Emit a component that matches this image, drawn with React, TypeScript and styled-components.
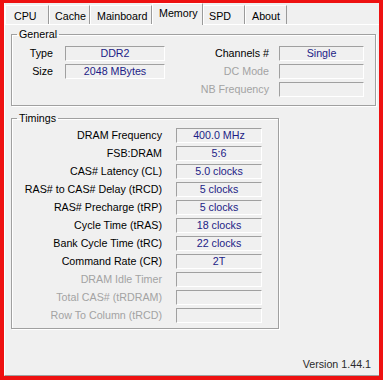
import styled, { createGlobalStyle } from "styled-components";

const GlobalStyle = createGlobalStyle`
  html, body {
    margin: 0;
    padding: 0;
    background: #f0f0f0;
  }
  body {
    font-family: "Liberation Sans", Arial, sans-serif;
    font-size: 10.7px;
    color: #000;
  }
`;

const tabs = [
  { name: "CPU", width: 44, pad: 8 },
  { name: "Cache", width: 41, pad: 5 },
  { name: "Mainboard", width: 62, pad: 6 },
  { name: "Memory", width: 51, pad: 6 },
  { name: "SPD", width: 42, pad: 5 },
  { name: "About", width: 42, pad: 6 },
];

const general = [
  { label: "Type", value: "DDR2" },
  { label: "Size", value: "2048 MBytes" },
];

const channels = [
  { label: "Channels #", value: "Single" },
  { label: "DC Mode", value: "", off: true },
  { label: "NB Frequency", value: "", off: true },
];

const timings = [
  { label: "DRAM Frequency", value: "400.0 MHz" },
  { label: "FSB:DRAM", value: "5:6" },
  { label: "CAS# Latency (CL)", value: "5.0 clocks" },
  { label: "RAS# to CAS# Delay (tRCD)", value: "5 clocks" },
  { label: "RAS# Precharge (tRP)", value: "5 clocks" },
  { label: "Cycle Time (tRAS)", value: "18 clocks" },
  { label: "Bank Cycle Time (tRC)", value: "22 clocks" },
  { label: "Command Rate (CR)", value: "2T" },
  { label: "DRAM Idle Timer", value: "", off: true },
  { label: "Total CAS# (tRDRAM)", value: "", off: true },
  { label: "Row To Column (tRCD)", value: "", off: true },
];

export default function App() {
  return (
    <>
      <GlobalStyle />
      <Frame>
        <Window>
          <TabBar>
            {tabs.map((t) => (
              <Tab
                key={t.name}
                $active={t.name === "Memory"}
                $w={t.width}
                $pad={t.pad}
              >
                {t.name}
              </Tab>
            ))}
          </TabBar>
          <Panel>
            <Group $w={365} $h={78}>
              <Legend>General</Legend>
              <GeneralRow>
                <InfoGrid $labelW={41} $fieldW={100} $gap={12}>
                  {general.map((r) => (
                    <InfoRow key={r.label} {...r} />
                  ))}
                </InfoGrid>
                <InfoGrid $labelW={90} $fieldW={85} $gap={10}>
                  {channels.map((r) => (
                    <InfoRow key={r.label} {...r} />
                  ))}
                </InfoGrid>
              </GeneralRow>
            </Group>
            <Group $w={268} $h={217} $top={6}>
              <Legend>Timings</Legend>
              <TimingsBody>
                <InfoGrid $labelW={150} $fieldW={86} $gap={14}>
                  {timings.map((r) => (
                    <InfoRow key={r.label} {...r} />
                  ))}
                </InfoGrid>
              </TimingsBody>
            </Group>
          </Panel>
          <Footer>Version 1.44.1</Footer>
        </Window>
      </Frame>
    </>
  );
}

function InfoRow({
  label,
  value,
  off,
}: {
  label: string;
  value: string;
  off?: boolean;
}) {
  return (
    <>
      <Label $off={off}>{label}</Label>
      <Field>{value}</Field>
    </>
  );
}

const Frame = styled.div`
  width: 383px;
  height: 380px;
  box-sizing: border-box;
  border: 4px solid #ee1111;
  border-top-width: 3px;
  background: #f0f0f0;
`;

const Window = styled.div`
  height: 100%;
  box-sizing: border-box;
  border-left: 1px solid #ffffff;
  border-bottom: 1px solid #a0a0a0;
  display: flex;
  flex-direction: column;
`;

const TabBar = styled.div`
  display: flex;
  align-items: flex-end;
  height: 21px;
  position: relative;
  z-index: 1;
`;

const Tab = styled.div<{ $active?: boolean; $w: number; $pad: number }>`
  box-sizing: border-box;
  width: ${(p) => p.$w}px;
  height: ${(p) => (p.$active ? 22 : 19)}px;
  margin-bottom: ${(p) => (p.$active ? -1 : 0)}px;
  padding-left: ${(p) => p.$pad}px;
  padding-top: ${(p) => (p.$active ? 3 : 4)}px;
  background: #f0f0f0;
  border-top: 1px solid #ffffff;
  border-left: 1px solid #ffffff;
  border-right: 1px solid #9a9a9a;
  white-space: nowrap;
  line-height: 13px;
`;

const Panel = styled.div`
  border-top: 1px solid #ffffff;
  padding: 3px 0 0 6px;
  display: flex;
  flex-direction: column;
  align-items: flex-start;
`;

const Group = styled.fieldset<{ $w: number; $h: number; $top?: number }>`
  box-sizing: border-box;
  width: ${(p) => p.$w}px;
  height: ${(p) => p.$h}px;
  margin: ${(p) => p.$top ?? 0}px 0 0 0;
  padding: 0;
  border: 1px solid #a0a0a0;
  box-shadow: inset 1px 1px 0 #ffffff, 1px 1px 0 #ffffff;
  min-inline-size: 0;
`;

const Legend = styled.legend`
  margin-left: 5px;
  padding: 0 2px;
  line-height: 12px;
  color: #000;
`;

const GeneralRow = styled.div`
  display: flex;
  justify-content: space-between;
  padding: 6px 11px 0 0;
`;

const TimingsBody = styled.div`
  padding: 4px 0 0 0;
`;

const InfoGrid = styled.div<{ $labelW: number; $fieldW: number; $gap: number }>`
  display: grid;
  grid-template-columns: ${(p) => p.$labelW}px ${(p) => p.$fieldW}px;
  grid-auto-rows: 15px;
  column-gap: ${(p) => p.$gap}px;
  row-gap: 3px;
  align-items: center;
`;

const Label = styled.div<{ $off?: boolean }>`
  text-align: right;
  white-space: nowrap;
  color: ${(p) => (p.$off ? "#a3a3a3" : "#000000")};
  line-height: 15px;
`;

const Field = styled.div`
  box-sizing: border-box;
  height: 15px;
  line-height: 13px;
  text-align: center;
  color: #1c1c86;
  background: #f0f0f0;
  border-top: 1px solid #a0a0a0;
  border-left: 1px solid #a0a0a0;
  border-right: 1px solid #ffffff;
  border-bottom: 1px solid #ffffff;
`;

const Footer = styled.div`
  margin-top: auto;
  padding: 0 8px 4px 0;
  text-align: right;
  color: #2a2a2a;
  line-height: 13px;
`;
